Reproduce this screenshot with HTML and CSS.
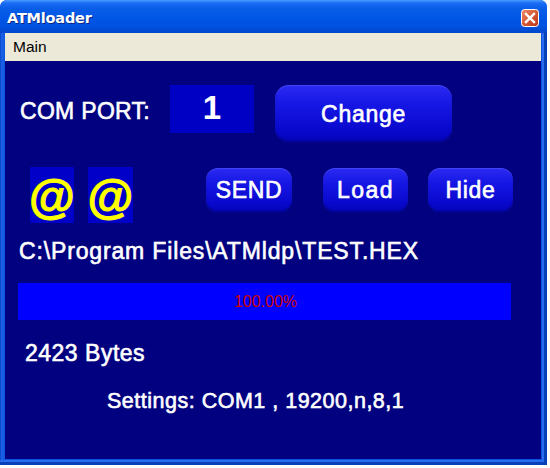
FILE: index.html
```html
<!DOCTYPE html>
<html>
<head>
<meta charset="utf-8">
<title>ATMloader</title>
<link rel="stylesheet" href="styles.css">
</head>
<body>
<div class="window">
  <div class="titlebar">
    <span class="title">ATMloader</span>
    <span class="close">
      <svg width="18" height="18" viewBox="0 0 18 18">
        <defs>
          <linearGradient id="cg" x1="0" y1="0" x2="1" y2="1">
            <stop offset="0" stop-color="#ec8a6a"/>
            <stop offset="0.5" stop-color="#d65a36"/>
            <stop offset="1" stop-color="#b8331a"/>
          </linearGradient>
        </defs>
        <rect x="0.5" y="0.5" width="17" height="17" rx="3" fill="url(#cg)" stroke="#ffffff" stroke-width="1"/>
        <path d="M5 5 L13 13 M13 5 L5 13" stroke="#ffffff" stroke-width="2.4" stroke-linecap="square"/>
      </svg>
    </span>
  </div>
  <div class="frame">
    <div class="menubar"><span class="menu-item">Main</span></div>
    <div class="content">
      <div class="row row-port">
        <span class="label">COM PORT:</span>
        <div class="port-box">1</div>
        <button class="btn btn-change">Change</button>
      </div>
      <div class="row row-actions">
        <div class="at at-first">@</div>
        <div class="at at-second">@</div>
        <button class="btn btn-send">SEND</button>
        <button class="btn btn-load">Load</button>
        <button class="btn btn-hide">Hide</button>
      </div>
      <div class="path">C:\Program Files\ATMldp\TEST.HEX</div>
      <div class="progress"><span class="progress-text">100.00%</span></div>
      <div class="bytes">2423 Bytes</div>
      <div class="settings">Settings: COM1 , 19200,n,8,1</div>
    </div>
  </div>
</div>
</body>
</html>
```
FILE: styles.css
```css
html, body {
  margin: 0;
  padding: 0;
  background: #ffffff;
}

.window {
  width: 547px;
  height: 465px;
  display: flex;
  flex-direction: column;
  background: #0a50dc;
  border-radius: 7px 7px 0 0;
  overflow: hidden;
  font-family: "Liberation Sans", Arial, sans-serif;
}

.titlebar {
  height: 33px;
  flex: none;
  display: flex;
  align-items: center;
  justify-content: space-between;
  padding: 0 8px 0 7px;
  box-sizing: border-box;
  background: linear-gradient(to bottom, #4a9cff 0px, #1a6df5 3px, #0a5ee8 8px, #0056e6 18px, #0052e0 26px, #0046cc 33px);
}

.title {
  color: #ffffff;
  font-family: "DejaVu Sans", sans-serif;
  font-weight: bold;
  font-size: 14.5px;
  letter-spacing: -0.2px;
  text-shadow: 1px 1px 0 #0b2a86;
  padding-top: 2px;
}

.close {
  width: 18px;
  height: 18px;
  display: flex;
  margin-top: 3px;
}

.frame {
  flex: 1;
  display: flex;
  flex-direction: column;
  padding: 0 6px 6px 5px;
  background: linear-gradient(to right, #0846c8 0px, #1d63e8 2px, #0a55e0 5px);
  box-shadow: inset -3px -3px 0 #0840b8, inset -5px -5px 0 #2a6cf0;
}

.menubar {
  height: 28px;
  flex: none;
  background: #ece9d8;
  display: flex;
  align-items: center;
}

.menu-item {
  font-family: "Liberation Sans", Arial, sans-serif;
  font-size: 15.5px;
  color: #000000;
  padding-left: 8px;
}

.content {
  flex: 1;
  background: #020280;
  color: #ffffff;
  padding-top: 24px;
  box-sizing: border-box;
}

.row {
  display: flex;
  align-items: flex-start;
}

.label,
.path,
.bytes,
.settings,
.btn {
  font-weight: normal;
  -webkit-text-stroke: 0.6px currentColor;
}

.label {
  flex: none;
  width: 150px;
  margin-left: 15px;
  height: 48px;
  line-height: 48px;
  padding-top: 2px;
  box-sizing: border-box;
  font-size: 23px;
  letter-spacing: 0.3px;
  white-space: nowrap;
}

.port-box {
  flex: none;
  width: 84px;
  height: 48px;
  background: #0000c4;
  display: flex;
  align-items: center;
  justify-content: center;
  font-size: 33px;
  font-weight: bold;
  line-height: 1;
  padding-bottom: 4px;
  box-sizing: border-box;
}

.btn {
  flex: none;
  border: none;
  padding: 0;
  margin: 0;
  color: #ffffff;
  font-family: "Liberation Sans", Arial, sans-serif;
  font-size: 23px;
  letter-spacing: 0.7px;
  background: linear-gradient(to bottom, #2a2af2 0%, #1616e4 35%, #0808cc 80%, #0404b4 100%);
  box-shadow: inset 0 -2px 2px rgba(0, 0, 60, 0.35), inset 0 1px 1px rgba(120, 120, 255, 0.35);
  display: flex;
  align-items: center;
  justify-content: center;
}

.btn-change {
  width: 177px;
  height: 58px;
  margin-left: 21px;
  border-radius: 14px;
}

.row-actions {
  margin-top: 24px;
}

.at {
  flex: none;
  width: 44px;
  height: 56px;
  background: #0000c8;
  color: #ffff00;
  font-family: "Liberation Sans", Arial, sans-serif;
  font-weight: bold;
  font-size: 47px;
  line-height: 60px;
  display: flex;
  justify-content: center;
  overflow: visible;
  -webkit-text-stroke: 1px #ffff00;
}

.at-first {
  margin-left: 25px;
}

.at-second {
  margin-left: 14px;
  width: 45px;
}

.btn-send,
.btn-load,
.btn-hide {
  height: 45px;
  margin-top: 1px;
  border-radius: 12px;
}

.btn-send {
  width: 86px;
  margin-left: 73px;
}

.btn-load {
  width: 85px;
  margin-left: 31px;
  letter-spacing: 1.5px;
}

.btn-hide {
  width: 85px;
  margin-left: 20px;
}

.path {
  margin-top: 17px;
  padding-left: 14px;
  font-size: 23px;
  line-height: 23px;
  letter-spacing: 0.85px;
  white-space: nowrap;
}

.progress {
  margin-top: 20px;
  margin-left: 13px;
  width: 493px;
  height: 37px;
  background: #0000ff;
  display: flex;
  align-items: center;
  justify-content: center;
}

.progress-text {
  color: #cc0000;
  font-size: 16px;
  padding-left: 2px;
}

.bytes {
  margin-top: 22px;
  padding-left: 20px;
  font-size: 23px;
  line-height: 23px;
  letter-spacing: 0.5px;
}

.settings {
  margin-top: 25px;
  padding-left: 102px;
  font-size: 21.5px;
  line-height: 22px;
  letter-spacing: 0.5px;
  white-space: nowrap;
}
```
